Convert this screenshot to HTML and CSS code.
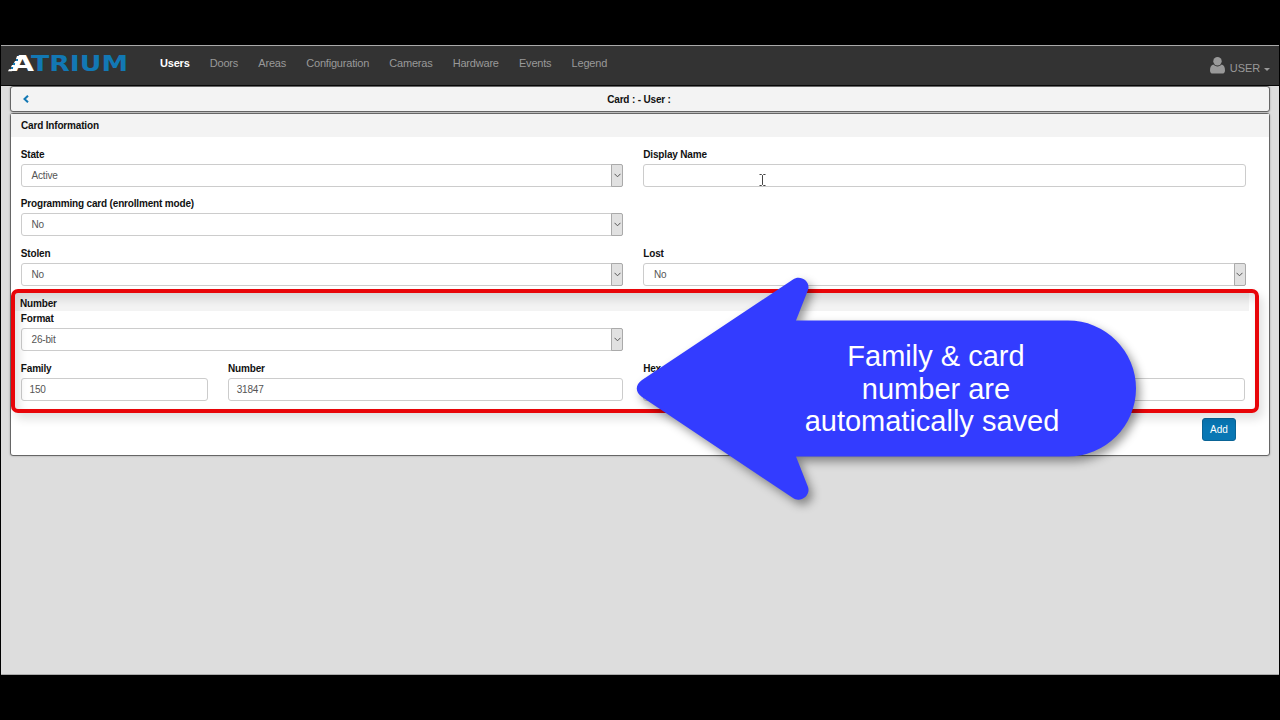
FILE: index.html
```html
<!DOCTYPE html>
<html lang="en">
<head>
    <meta charset="UTF-8">
    <meta name="viewport" content="width=device-width, initial-scale=1.0">
    <title>Atrium | Card</title>
    <link rel="stylesheet" href="styles.css">
</head>
<body>

    <div class="screen">
        <header class="navbar">
            <a class="logo" href="#" aria-label="Atrium">
                <svg width="124" height="28" viewBox="0 0 124 28">
                    <text class="logo-a" x="3" y="21" textLength="23" lengthAdjust="spacingAndGlyphs">A</text>
                    <text class="logo-rest" x="23" y="21" textLength="97" lengthAdjust="spacingAndGlyphs">TRIUM</text>
                    <path class="logo-a-fill" d="M0 21.300h4l1-3H3v1H1zM3 17h3v-2H4zM6 13h3v-2H7zM8 9h4V6H9z"/>
                    <path class="logo-dots" d="M3 17h2v2H3zM5 13h2v2H5zM8 9h2v2H8z"/>
                </svg>
            </a>
            <nav class="menu">
                <a class="active" href="#">Users</a>
                <a href="#">Doors</a>
                <a href="#">Areas</a>
                <a href="#">Configuration</a>
                <a href="#">Cameras</a>
                <a href="#">Hardware</a>
                <a href="#">Events</a>
                <a href="#">Legend</a>
            </nav>
            <a class="account" href="#">
                <svg width="15" height="17" viewBox="0 0 15 17">
                    <circle cx="7.5" cy="4.3" r="4.2"/>
                    <path d="M3.3 7.6C1 8.2 0 10.300 0 13.500C0 15.600 1 16.600 2.800 16.600H12.200C14 16.600 15 15.600 15 13.500C15 10.300 14 8.200 11.700 7.600C9.500 10 5.500 10 3.300 7.600Z"/>
                </svg>
                <span>USER</span>
                <i class="caret"></i>
            </a>
        </header>

        <main>
            <div class="title-bar">
                <svg class="back" width="6" height="8" viewBox="0 0 6 8"><path d="M5 .7L1.500 4L5 7.300"/></svg>
                <h1>Card : - User :</h1>
            </div>

            <form class="panel">
                <h2>Card Information</h2>
                <div class="row">
                    <div class="field">
                        <label>State</label>
                        <div class="control select">Active<span class="arrow"><svg width="7" height="5" viewBox="0 0 7 5"><path d="M.5 .8L3.500 3.800L6.500 .8"/></svg></span></div>
                    </div>
                    <div class="field">
                        <label>Display Name</label>
                        <div class="control"></div>
                    </div>
                </div>
                <div class="row">
                    <div class="field">
                        <label>Programming card (enrollment mode)</label>
                        <div class="control select">No<span class="arrow"><svg width="7" height="5" viewBox="0 0 7 5"><path d="M.5 .8L3.500 3.800L6.500 .8"/></svg></span></div>
                    </div>
                </div>
                <div class="row">
                    <div class="field">
                        <label>Stolen</label>
                        <div class="control select">No<span class="arrow"><svg width="7" height="5" viewBox="0 0 7 5"><path d="M.5 .8L3.500 3.800L6.500 .8"/></svg></span></div>
                    </div>
                    <div class="field">
                        <label>Lost</label>
                        <div class="control select">No<span class="arrow"><svg width="7" height="5" viewBox="0 0 7 5"><path d="M.5 .8L3.500 3.800L6.500 .8"/></svg></span></div>
                    </div>
                </div>

                <h3>Number</h3>
                <div class="row">
                    <div class="field">
                        <label>Format</label>
                        <div class="control select">26-bit<span class="arrow"><svg width="7" height="5" viewBox="0 0 7 5"><path d="M.5 .8L3.500 3.800L6.500 .8"/></svg></span></div>
                    </div>
                </div>
                <div class="row row-number">
                    <div class="field">
                        <label>Family</label>
                        <div class="control">150</div>
                    </div>
                    <div class="field">
                        <label>Number</label>
                        <div class="control">31847</div>
                    </div>
                    <div class="field">
                        <label>Hex</label>
                        <div class="control"></div>
                    </div>
                </div>
                <div class="actions">
                    <button type="button">Add</button>
                </div>
            </form>
        </main>
    </div>

    <!-- Callouts over the form -->
    <div class="highlight"></div>
    <div class="callout">
        <svg width="502" height="224" viewBox="0 0 502 224">
            <path d="M6 103L157 2.500C164 -2.500 175 4 172 13L160 43.500H432A68 68 0 0 1 432 179.500H160L172 210C175 219 164 226 157 221L6 120C-1 115 -1 108 6 103Z"/>
        </svg>
        <p>Family &amp; card<br>number are<br>automatically saved&nbsp;</p>
    </div>
    <svg class="cursor" width="7" height="12" viewBox="0 0 7 12"><path d="M.5 .5H2.500L3.500 1.500L4.500 .5H6.500M3.500 1.500V10.500M.5 11.500H2.500L3.500 10.500L4.500 11.500H6.500"/></svg>

</body>
</html>
```

FILE: styles.css
```css
* {
    box-sizing: border-box;
}
body {
    margin: 0;
    padding: 45px 1px;
    height: 720px;
    overflow: hidden;
    background-color: #000;
    font-family: "Liberation Sans", Arial, sans-serif;
    font-size: 10px;
    letter-spacing: -.17px;
    color: #555;
}
.screen {
    height: 630px;
    background-color: #ddd;
    border-top: 1px solid #aaa;
    border-bottom: 1px solid #aaa;
}

/* Navbar */
.navbar {
    display: flex;
    height: 40px;
    background-color: #333;
    border-bottom: 1px solid #080808;
}
.logo {
    width: 149px;
    padding: 4px 0 0 7px;
}
.logo svg {
    display: block;
    overflow: visible;
}
.logo text {
    font-family: "DejaVu Sans", sans-serif;
    font-size: 21px;
    line-height: 24px;
    letter-spacing: 0;
    font-weight: bold;
}
.logo-a,
.logo-a-fill {
    fill: #fff;
}
.logo-rest,
.logo-dots {
    fill: #1278b4;
}
.menu {
    display: flex;
    padding-top: 10px;
    gap: 20.2px;
    padding-left: 10px;
    font-size: 11px;
    letter-spacing: -.2px;
    line-height: 14px;
}
.menu a,
.account {
    color: #999;
    text-decoration: none;
}
.menu .active {
    color: #fff;
    font-weight: bold;
}
.account {
    display: flex;
    margin-left: auto;
    padding: 11px 9px 0 0;
    gap: 5px;
    font-size: 11px;
    letter-spacing: -.1px;
    line-height: 22px;
}
.account svg {
    fill: #999;
}
.caret {
    width: 6px;
    height: 3px;
    margin: 11px 0 0 -1px;
    border: 3px solid transparent;
    border-top-color: #999;
    border-bottom: 0;
}

/* Panels */
main {
    padding: 0 9px;
}
.title-bar,
.panel {
    border: 1px solid #666;
    border-radius: 3px;
    box-shadow: 0 0 2px rgba(0, 0, 0, .3);
}
.title-bar {
    display: flex;
    align-items: center;
    height: 26px;
    background-color: #f3f3f3;
}
.back {
    margin-left: 12px;
    fill: none;
    stroke: #1278b4;
    stroke-width: 2;
}
h1,
h2,
h3 {
    margin: 0;
    font-size: 10px;
    color: #111;
}
h1 {
    flex: 1;
    margin-right: 20px;
    text-align: center;
}
.panel {
    height: 343px;
    margin-top: 1px;
    background-color: #fff;
}
h2,
h3 {
    background-color: #f3f3f3;
    padding-left: 10px;
}
h2 {
    height: 23px;
    margin-bottom: 10px;
    line-height: 24px;
}
h3 {
    height: 18px;
    margin: -2px 20px 0 0;
    padding-left: 9px;
    line-height: 22px;
}

/* Form */
.row {
    display: grid;
    grid-template-columns: 602.5px 602.5px;
    column-gap: 20px;
    height: 49.4px;
    padding-left: 9.5px;
}
.row-number {
    grid-template-columns: 187.5px 395.5px 602.5px;
    column-gap: 19.7px;
}
label {
    display: block;
    height: 17px;
    padding-left: .3px;
    line-height: 15px;
    font-weight: bold;
    color: #111;
}
.control {
    height: 23px;
    padding-left: 8px;
    border: 1px solid #ccc;
    border-radius: 3px;
    background-color: #fff;
    line-height: 21px;
}
.select {
    display: flex;
    justify-content: space-between;
    padding-left: 10px;
}
.arrow {
    display: flex;
    align-items: center;
    justify-content: center;
    width: 12px;
    margin: -1px;
    border: 1px solid #aaa;
    border-radius: 0 2px 2px 0;
    background-color: #e1e1e1;
}
.arrow svg {
    fill: none;
    stroke: #555;
}
.actions {
    display: flex;
    justify-content: flex-end;
    padding: 8px 33px 0 0;
}
button {
    width: 34px;
    height: 23px;
    padding: 0;
    border: 1px solid #0a6496;
    border-radius: 3px;
    background-color: #0877b4;
    color: #fff;
    font-family: inherit;
    font-size: 10px;
}

/* Callouts */
.highlight {
    position: absolute;
    left: 11px;
    top: 289px;
    width: 1248px;
    height: 124px;
    border: 4px solid #e80509;
    border-radius: 7px;
    box-shadow: 4px 6px 10px rgba(0, 0, 0, .12), inset 4px 6px 10px rgba(0, 0, 0, .12);
}
.callout {
    position: absolute;
    left: 636px;
    top: 277px;
    width: 502px;
    height: 224px;
}
.callout svg {
    display: block;
    fill: #333cff;
    filter: drop-shadow(4px 5px 5px rgba(0, 0, 0, .4));
    overflow: visible;
}
.callout p {
    position: absolute;
    left: 150px;
    top: 63px;
    width: 300px;
    margin: 0;
    color: #fff;
    font-size: 29px;
    letter-spacing: 0;
    line-height: 32.7px;
    text-align: center;
}
.cursor {
    position: absolute;
    left: 759px;
    top: 174px;
    fill: none;
    stroke: #444;
}
```
